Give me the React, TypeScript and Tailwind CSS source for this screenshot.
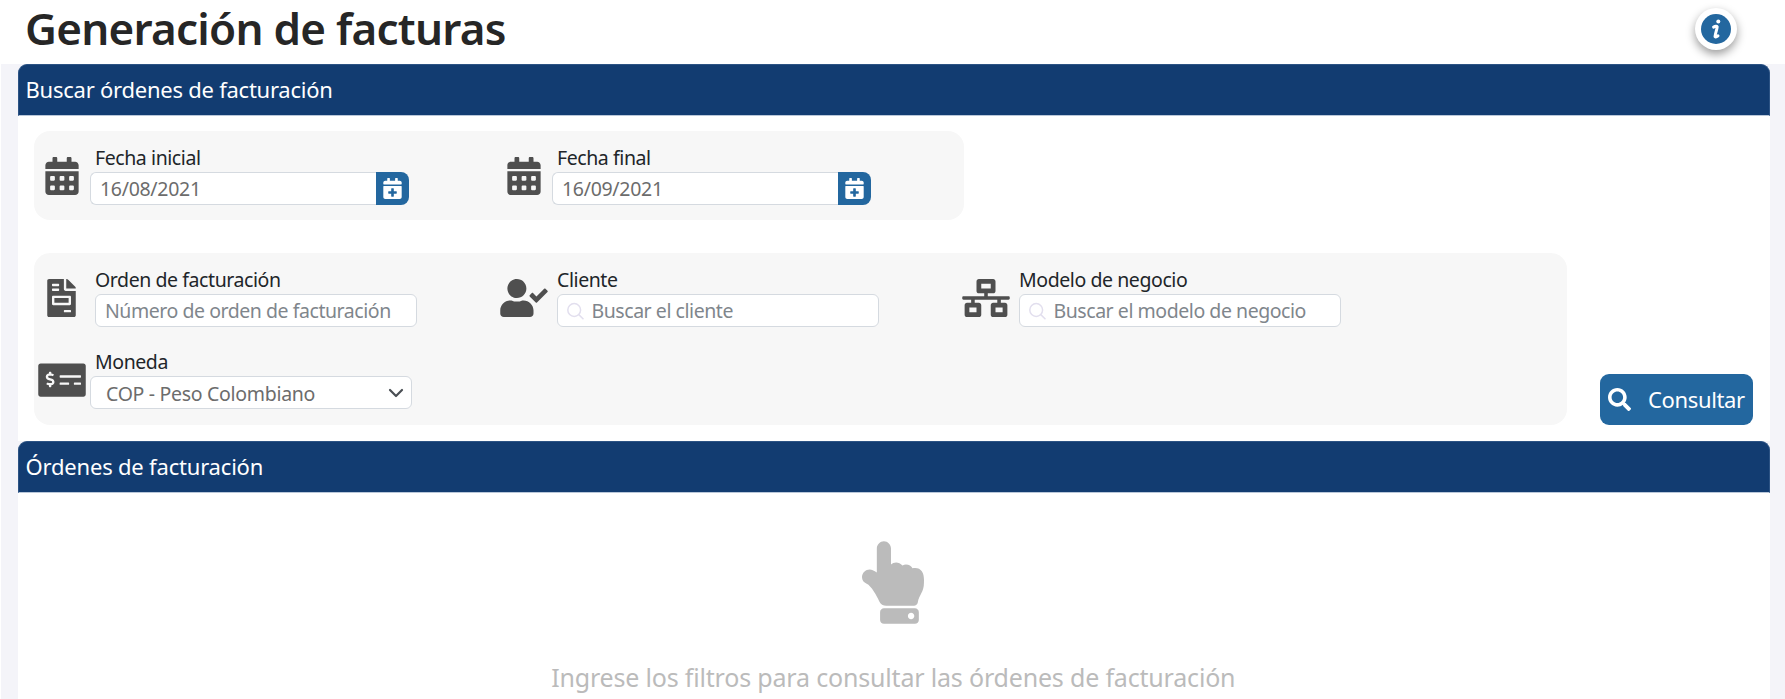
import type { ReactNode } from 'react';
import {
  FaCalendarAlt,
  FaCalendarPlus,
  FaFileInvoice,
  FaHandPointUp,
  FaMoneyCheckAlt,
  FaNetworkWired,
  FaSearch,
  FaUserCheck,
} from 'react-icons/fa';

function SectionHeader({ children }: { children: ReactNode }) {
  return (
    <div className="flex h-[51.5px] items-center rounded-t-[9px] border border-[#2c5384] border-b-[#b9c7d9] bg-[#123c71] pl-[7px] text-[22px] tracking-[-0.24px] text-white">
      {children}
    </div>
  );
}

type FieldProps = { icon: ReactNode; label: string; indent?: boolean; children: ReactNode };

function Field({ icon, label, indent, children }: FieldProps) {
  return (
    <div className="flex h-[82px] w-[462px]">
      <div className="ml-[3.5px] mt-[26px] flex h-[38px] w-12 justify-center text-[#4f4f4f]">{icon}</div>
      <div className="ml-[9.5px] w-[322px] pt-[13px]">
        <div className="flex h-[28px] items-start whitespace-nowrap text-[19.5px] leading-[28px] tracking-[-0.42px] text-[#212529]">
          {label}
        </div>
        <div className={indent ? '-ml-[5px]' : ''}>{children}</div>
      </div>
    </div>
  );
}

function DateInput({ value }: { value: string }) {
  return (
    <div className="flex h-[33px] w-[319px]">
      <div className="flex flex-1 items-center rounded-l-[6px] border border-r-0 border-[#d5dae0] bg-white pl-[9px] pt-px text-[19.5px] tracking-[-0.3px] text-[#6c6c6c]">
        {value}
      </div>
      <div className="flex w-[33px] items-center justify-center rounded-r-[8px] bg-[#23679f] pr-px text-white">
        <FaCalendarPlus className="h-[21px] w-[19px]" />
      </div>
    </div>
  );
}

function TextInput({ text, search }: { text: string; search?: boolean }) {
  return (
    <div className="flex h-[33px] w-[322px] items-center rounded-[6px] border border-[#d5dae0] bg-white pl-[9px] text-[#7f868c]">
      {search && (
        <svg className="mr-[6.5px] h-[18px] w-[18px]" viewBox="0 0 18 18" fill="none" stroke="#e2dfee" strokeWidth="1.5">
          <circle cx="7.2" cy="8" r="6.4" />
          <path d="M11.8 12.6 16.5 17.3" />
        </svg>
      )}
      <span className="whitespace-nowrap pt-px text-[19.5px] tracking-[-0.45px]">{text}</span>
    </div>
  );
}

export default function App() {
  return (
    <div className="h-[699px] w-[1785px] overflow-hidden bg-white font-['Noto_Sans','Open_Sans',sans-serif]">
      <header className="flex h-16 justify-between pl-[25px] pr-[48px]">
        <h1 className="whitespace-nowrap text-[44px] font-[560] leading-[56px] tracking-[-0.75px] text-[#262626]">
          Generación de facturas
        </h1>
        <div className="mt-[7.5px] flex h-[42px] w-[42px] items-center justify-center rounded-full bg-white shadow-[0_4px_10px_rgba(0,0,0,0.4)]">
          <svg className="h-[30px] w-[30px]" viewBox="0 0 30 30">
            <circle cx="15" cy="15" r="15" fill="#23679f" />
            <circle cx="17.3" cy="7.6" r="2" fill="#fff" />
            <path
              d="M12.6 13.1c1.6-.8 3.4-1.2 3.6-.2.2.9-2.6 9-2.2 9.8.3.6 1.7.1 3-.9"
              fill="none"
              stroke="#fff"
              strokeWidth="3"
              strokeLinecap="round"
              strokeLinejoin="round"
            />
          </svg>
        </div>
      </header>

      <main className="ml-px h-[635px] bg-[#f4f4f9] pl-[16.5px] pr-[15px]">
        <SectionHeader>Buscar órdenes de facturación</SectionHeader>
        <section className="h-[325.5px] bg-white pl-[16.5px] pt-[15.5px]">
          <div className="flex h-[89px] w-[930px] rounded-2xl bg-[#f7f7f7]">
            <Field icon={<FaCalendarAlt className="h-[38px] w-[34px]" />} label="Fecha inicial" indent>
              <DateInput value="16/08/2021" />
            </Field>
            <Field icon={<FaCalendarAlt className="h-[38px] w-[34px]" />} label="Fecha final" indent>
              <DateInput value="16/09/2021" />
            </Field>
          </div>
          <div className="mt-[33px] flex items-end">
            <div className="flex h-[172px] w-[1533px] flex-wrap content-start rounded-2xl bg-[#f7f7f7]">
              <Field icon={<FaFileInvoice className="h-[38px] w-[29px]" />} label="Orden de facturación">
                <TextInput text="Número de orden de facturación" />
              </Field>
              <Field icon={<FaUserCheck className="h-[38px] w-12" />} label="Cliente">
                <TextInput text="Buscar el cliente" search />
              </Field>
              <Field icon={<FaNetworkWired className="h-[38px] w-12" />} label="Modelo de negocio">
                <TextInput text="Buscar el modelo de negocio" search />
              </Field>
              <Field icon={<FaMoneyCheckAlt className="h-[38px] w-12" />} label="Moneda" indent>
                <div className="flex h-[33px] w-[322px] items-center justify-between rounded-[6px] border border-[#d5dae0] bg-white pl-[15px] pr-[7px] text-[19.5px] text-[#6c6c6c]">
                  <span className="whitespace-nowrap pt-[2px] tracking-[-0.3px]">COP - Peso Colombiano</span>
                  <svg className="h-[10px] w-4" viewBox="0 0 16 10" fill="none" stroke="#4a4f54" strokeWidth="2.2" strokeLinecap="round" strokeLinejoin="round">
                    <path d="m2 2 6 6 6-6" />
                  </svg>
                </div>
              </Field>
            </div>
            <button className="ml-[33px] flex h-[51px] w-[153px] items-center rounded-[9px] bg-[#23679f] pl-2 text-[22px] text-white">
              <FaSearch className="h-[23px] w-[23px]" />
              <span className="ml-[17px] tracking-[-0.35px]">Consultar</span>
            </button>
          </div>
        </section>

        <SectionHeader>
          <span className="tracking-[-0.19px]">Órdenes de facturación</span>
        </SectionHeader>
        <section className="flex h-[207px] flex-col items-center bg-white pr-px pt-[48.5px] text-[#bbbbbb]">
          <FaHandPointUp className="h-[83px] w-[62px] shrink-0" />
          <p className="mt-[35px] whitespace-nowrap text-[25px] leading-[36px] tracking-[-0.18px]">
            Ingrese los filtros para consultar las órdenes de facturación
          </p>
        </section>
      </main>
    </div>
  );
}
